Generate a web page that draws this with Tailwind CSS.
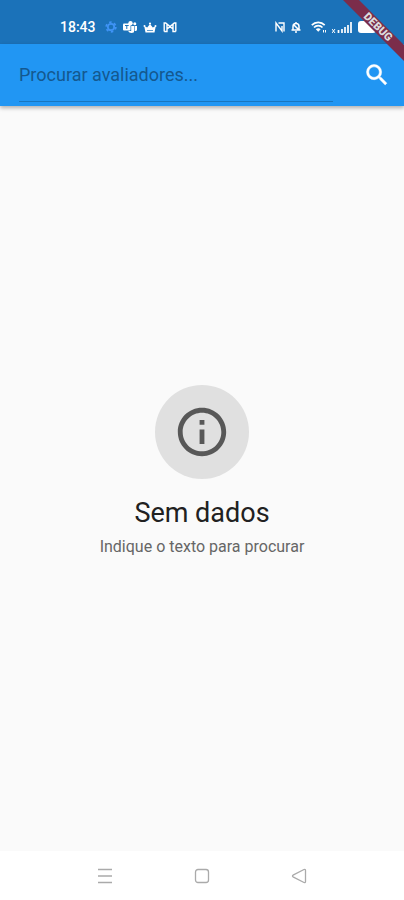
<!DOCTYPE html>
<html lang="pt">
<head>
<meta charset="utf-8">
<meta name="viewport" content="width=device-width, initial-scale=1">
<title>Procurar avaliadores</title>
<script src="https://cdn.jsdelivr.net/npm/@tailwindcss/browser@4"></script>
</head>
<body class="relative flex min-h-screen flex-col overflow-x-hidden bg-[#fafafa] font-['Roboto',sans-serif]">
  <!-- Status bar -->
  <div class="flex h-11 items-center justify-between bg-[#1b72b9] pt-2.5 pr-[26px] pl-15 text-white">
    <div class="flex items-center">
      <span class="text-sm font-medium">18:43</span>
      <div class="ml-[9px] flex items-center gap-[6px]">
        <svg class="size-3" viewBox="0 0 12 12" fill="none" stroke="#3f93f5" aria-hidden="true"><circle cx="6" cy="6" r="3.2" stroke-width="1.8"/><circle cx="6" cy="6" r="4.8" stroke-width="1.8" stroke-dasharray="2.5 2.53"/></svg>
        <svg class="h-3 w-3.5" viewBox="0 0 14 12" fill="#fff" aria-hidden="true"><rect y="2.5" width="7.5" height="7" rx="1"/><circle cx="7.5" cy="2.2" r="2.2"/><circle cx="11.8" cy="2.7" r="1.5"/><path d="M8.2 5H11v6.2c-2 1.2-5 .9-5.8-1.2h3zM11.6 5H14v3.5c0 1-.9 1.7-2.4 1.6z"/><path d="M2 4.5h3.7M3.8 4.5V8" stroke="#1b72b9" stroke-width="1"/></svg>
        <svg class="h-3 w-3.5" viewBox="0 0 14 12" fill="#fff" aria-hidden="true"><path d="M1.2 5l3 1.500L7 3l2.8 3.500 3-1.500-1.300 6.500h-9z"/><circle cx="7" cy="2.500" r="1.100"/><circle cx="1.500" cy="5" r="1"/><circle cx="12.500" cy="5" r="1"/><path d="M4 9.500h6" stroke="#1b72b9" stroke-width=".7"/></svg>
        <svg class="h-3 w-3.5" viewBox="0 0 14 12" fill="none" stroke="#fff" stroke-width="1.400" aria-hidden="true"><path d="M1.200 10.500V2h1.500L7 5.500 11.300 2h1.500v8.500M4 3.200v7.300H1.200M10 3.200v7.300h2.800M4 8l3-2.300L10 8"/></svg>
      </div>
    </div>
    <div class="flex items-center gap-[5px]">
      <svg class="h-3 w-2.5" viewBox="0 0 10 12" fill="none" stroke="#fff" stroke-width="1.400" aria-hidden="true"><path d="M1 10.500V2l6 8V5M3.500 2H9v8.500"/></svg>
      <svg class="size-3" viewBox="0 0 12 12" fill="none" stroke="#fff" stroke-width="1.500" aria-hidden="true"><path d="M3 9V5.500a3 3 0 016 0V9M1.500 9h9M5 11h2M6 1v1.500M4 4l5 5"/></svg>
      <svg class="ml-1 h-3 w-4" viewBox="0 0 16 12" fill="none" stroke="#fff" stroke-width="1.700" aria-hidden="true"><path d="M.8 4.200c3.500-3.700 9.400-3.700 12.900 0M3 6.500c2.300-2.400 6.200-2.400 8.500 0"/><path d="M4.800 8.200c1.400-1.400 3.500-1.400 4.900 0l-2.450 2.600z" fill="#fff" stroke="none"/><path d="M12.500 9v2.500M14.500 9v2.500" stroke-width="1"/></svg>
      <div class="flex items-center gap-[6px]">
        <svg class="h-3 w-5" viewBox="0 0 20 12" stroke="#fff" fill="none" aria-hidden="true"><path d="M0 8l3 4M3 8l-3 4" stroke-width="1"/><path d="M6.500 12V9M10 12V8M13 12V6M16 12V4M19 12V1" stroke-width="1.700"/></svg>
        <svg class="h-3 w-5" viewBox="0 0 20 12" fill="#fff" aria-hidden="true"><rect width="18" height="12" rx="3"/><rect x="18.500" y="4" width="1.500" height="4" rx=".7"/></svg>
      </div>
    </div>
  </div>

  <!-- Search bar -->
  <header class="flex items-center justify-between bg-[#2196f3] pb-1 pl-[19px] shadow-[0_2px_4px_rgba(0,0,0,0.3)]">
    <input type="text" aria-label="Procurar avaliadores" placeholder="Procurar avaliadores..." class="h-[58px] min-w-0 flex-1 border-b border-[#1976be] pt-1 text-lg text-[#124a78] outline-none placeholder:text-[#14588f]">
    <button type="button" aria-label="Procurar" class="ml-[30px] flex w-[41px] items-center pt-1 text-white">
      <svg class="size-7" viewBox="0 0 24 24" fill="currentColor" aria-hidden="true"><path d="M15.500 14h-.79l-.28-.27A6.471 6.471 0 0016 9.500 6.500 6.500 0 109.500 16c1.610 0 3.090-.59 4.230-1.570l.27.28v.79l5 4.990L20.490 19l-4.990-5zm-6 0C7.010 14 5 11.990 5 9.500S7.010 5 9.500 5 14 7.010 14 9.500 11.990 14 9.500 14z" stroke="currentColor" stroke-width=".4"/></svg>
    </button>
  </header>

  <!-- Empty state -->
  <main class="flex flex-1 flex-col items-center justify-center pb-3.5 text-center">
    <div class="flex size-[94px] items-center justify-center rounded-full bg-[#e0e0e0] text-[#585858]">
      <svg class="size-[58px]" viewBox="0 0 24 24" fill="currentColor" aria-hidden="true"><path d="M11 7h2v2h-2zm0 4h2v6h-2zm1-9C6.480 2 2 6.480 2 12s4.480 10 10 10 10-4.480 10-10S17.520 2 12 2zm0 18c-4.410 0-8-3.590-8-8s3.590-8 8-8 8 3.590 8 8-3.590 8-8 8z"/></svg>
    </div>
    <h1 class="mt-4 text-[27px] leading-9 text-[#212121]">Sem dados</h1>
    <p class="mt-1 text-base leading-6 text-[#666]">Indique o texto para procurar</p>
  </main>

  <!-- System navigation -->
  <nav aria-label="Sistema" class="flex h-[49px] items-center justify-center gap-[81px] bg-white text-[#aaa]">
    <button type="button" aria-label="Recentes"><svg class="size-4" viewBox="0 0 16 16" stroke="currentColor" stroke-width="1.300" aria-hidden="true"><path d="M1 1.500h14M1 8h14M1 14.500h14"/></svg></button>
    <button type="button" aria-label="Início"><svg class="size-4" viewBox="0 0 16 16" fill="none" stroke="currentColor" stroke-width="1.300" aria-hidden="true"><rect x="1.500" y="1.500" width="13" height="13" rx="2.500"/></svg></button>
    <button type="button" aria-label="Voltar"><svg class="size-4" viewBox="0 0 16 16" fill="none" stroke="currentColor" stroke-width="1.300" stroke-linejoin="round" aria-hidden="true"><path d="M2 7.200L13 1.500q1.500-.5 1.500 1v11q0 1.500-1.500 1L2 8.800q-1-.8 0-1.600z"/></svg></button>
  </nav>

  <!-- Debug ribbon -->
  <svg class="pointer-events-none absolute top-0 right-0 size-16" viewBox="0 0 64 64" aria-hidden="true">
    <path d="M3 0h16l45 45v16z" fill="#7b2d4b"/>
    <text x="38" y="27" transform="rotate(45 38 27)" text-anchor="middle" dominant-baseline="central" class="fill-[#ddd] text-[11px] font-black">DEBUG</text>
  </svg>
</body>
</html>
